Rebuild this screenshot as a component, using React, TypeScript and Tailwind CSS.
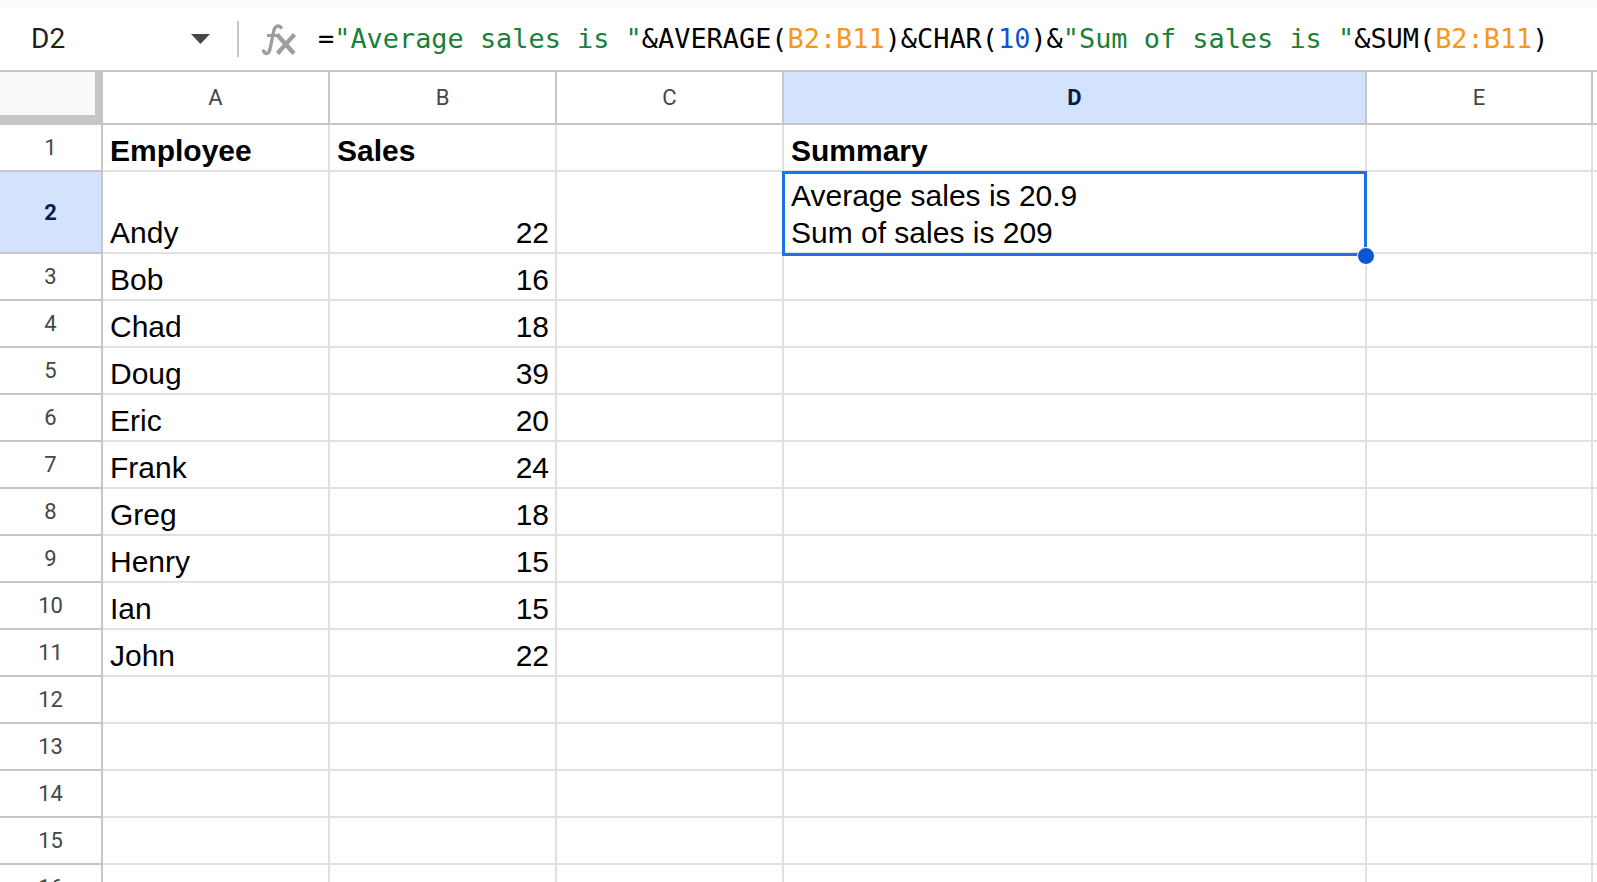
import React from "react";

type Col = { key: string; w: string };
const cols: Col[] = [
  { key: "A", w: "w-[227px]" },
  { key: "B", w: "w-[227px]" },
  { key: "C", w: "w-[227px]" },
  { key: "D", w: "w-[583px]" },
  { key: "E", w: "w-[226px]" },
];

type Row = { n: number; a?: string; b?: string; d?: string[]; bold?: boolean; tall?: boolean; sel?: boolean };
const rows: Row[] = [
  { n: 1, a: "Employee", b: "Sales", d: ["Summary"], bold: true },
  { n: 2, a: "Andy", b: "22", d: ["Average sales is 20.9", "Sum of sales is 209"], tall: true, sel: true },
  { n: 3, a: "Bob", b: "16" },
  { n: 4, a: "Chad", b: "18" },
  { n: 5, a: "Doug", b: "39" },
  { n: 6, a: "Eric", b: "20" },
  { n: 7, a: "Frank", b: "24" },
  { n: 8, a: "Greg", b: "18" },
  { n: 9, a: "Henry", b: "15" },
  { n: 10, a: "Ian", b: "15" },
  { n: 11, a: "John", b: "22" },
  { n: 12 },
  { n: 13 },
  { n: 14 },
  { n: 15 },
  { n: 16 },
];

const headFont = { fontFamily: "Roboto, 'Liberation Sans', sans-serif" };
const cellFont = { fontFamily: "'Liberation Sans', Arial, sans-serif" };
const monoFont = { fontFamily: "'DejaVu Sans Mono', 'Liberation Mono', monospace" };

function FxIcon() {
  return (
    <svg width="34" height="31" viewBox="0 0 34 31" fill="none" className="shrink-0">
      <path d="M1.5 27 C3 30.5 7 30.5 8 25 L11.8 7 C12.8 1.8 16.5 0.8 19 3.5" stroke="#9e9e9e" strokeWidth="3.4" strokeLinecap="round" />
      <path d="M5 11.5 H17.5" stroke="#9e9e9e" strokeWidth="3" />
      <path d="M15 10.5 L32 29.5 M32.5 10.5 L15.5 29.5" stroke="#9e9e9e" strokeWidth="4.4" />
    </svg>
  );
}

function CellText({ lines, bold, right }: { lines: string[]; bold?: boolean; right?: boolean }) {
  return (
    <div className={`flex h-full w-full flex-col justify-end overflow-hidden whitespace-nowrap pb-[1px] text-[30px] leading-[37px] text-black ${right ? "items-end pr-[6px]" : "items-start pl-[7px]"} ${bold ? "font-bold" : "font-normal"}`} style={cellFont}>
      {lines.map((l, i) => (
        <div key={i}>{l}</div>
      ))}
    </div>
  );
}

export default function App() {
  return (
    <div className="relative h-[882px] w-[1597px] overflow-hidden bg-white">
      <div className="h-[7px] bg-[#f9fbfd]" />
      {/* formula bar */}
      <div className="flex h-[65px] items-center border-b-2 border-[#c4c7c5] bg-white">
        <div className="flex w-[222px] items-center justify-between pl-[31px] pr-[12px]">
          <span className="text-[28px] text-[#1f1f1f]" style={headFont}>D2</span>
          <svg width="19" height="10" viewBox="0 0 19 10">
            <path d="M0 0 H19 L9.5 10 Z" fill="#444746" />
          </svg>
        </div>
        <div className="ml-[15px] h-[36px] w-[2px] bg-[#c4c7c5]" />
        <div className="ml-[23px] mt-[1px]">
          <FxIcon />
        </div>
        <div className="ml-[22px] mt-[2px] whitespace-nowrap text-[26.9px] text-black" style={monoFont}>
          <span>=</span>
          <span className="text-[#188038]">"Average sales is "</span>
          <span>&amp;AVERAGE(</span>
          <span className="text-[#f7981d]">B2:B11</span>
          <span>)&amp;CHAR(</span>
          <span className="text-[#1155cc]">10</span>
          <span>)&amp;</span>
          <span className="text-[#188038]">"Sum of sales is "</span>
          <span>&amp;SUM(</span>
          <span className="text-[#f7981d]">B2:B11</span>
          <span>)</span>
        </div>
      </div>

      {/* column headers */}
      <div className="flex h-[53px] border-b-2 border-[#c4c7c5]" style={headFont}>
        <div className="h-full w-[103px] shrink-0 border-b-[8px] border-r-[8px] border-[#c4c7c5] bg-[#f8f9fa]" />
        {cols.map((c) => (
          <div
            key={c.key}
            className={`${c.w} flex shrink-0 items-center justify-center border-r-2 border-[#c4c7c5] text-[22px] ${c.key === "D" ? "bg-[#d3e3fd] font-bold text-[#041e49]" : "bg-white text-[#444746]"}`}
          >
            {c.key}
          </div>
        ))}
        <div className="flex-1 bg-white" />
      </div>

      {/* rows */}
      {rows.map((r) => (
        <div key={r.n} className={`flex ${r.tall ? "h-[82px]" : "h-[47px]"}`}>
          <div
            className={`flex w-[103px] shrink-0 items-center justify-center border-b-2 border-r-2 border-[#c4c7c5] text-[22px] ${r.sel ? "bg-[#d3e3fd] font-bold text-[#041e49]" : "bg-white text-[#444746]"}`}
            style={headFont}
          >
            {r.n}
          </div>
          <div className="w-[227px] shrink-0 border-b-2 border-r-2 border-[#e1e1e1]">
            {r.a && <CellText lines={[r.a]} bold={r.bold} />}
          </div>
          <div className="w-[227px] shrink-0 border-b-2 border-r-2 border-[#e1e1e1]">
            {r.b && <CellText lines={[r.b]} bold={r.bold} right={!r.bold} />}
          </div>
          <div className="w-[227px] shrink-0 border-b-2 border-r-2 border-[#e1e1e1]" />
          <div className="w-[583px] shrink-0 border-b-2 border-r-2 border-[#e1e1e1]">
            {r.d && <CellText lines={r.d} bold={r.bold} />}
          </div>
          <div className="w-[226px] shrink-0 border-b-2 border-r-2 border-[#e1e1e1]" />
          <div className="flex-1 border-b-2 border-[#e1e1e1]" />
        </div>
      ))}

      {/* selection overlay */}
      <div className="pointer-events-none absolute left-[782px] top-[171px] h-[85px] w-[585px] border-[3px] border-[#1a73e8]" />
      <div className="pointer-events-none absolute left-[1357px] top-[247px] h-[18px] w-[18px] rounded-full border border-white bg-[#0b57d0]" />
    </div>
  );
}
